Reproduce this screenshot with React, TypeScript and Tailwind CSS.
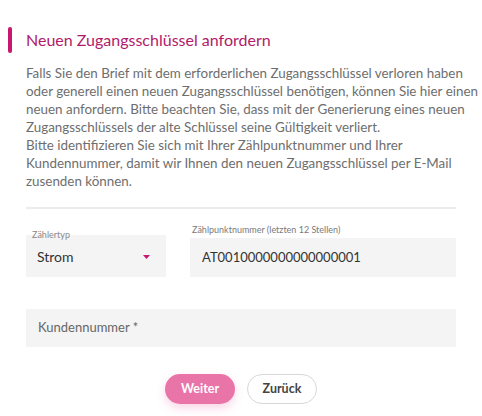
export default function App() {
    const lines = [
        'Falls Sie den Brief mit dem erforderlichen Zugangsschlüssel verloren haben',
        'oder generell einen neuen Zugangsschlüssel benötigen, können Sie hier einen',
        'neuen anfordern. Bitte beachten Sie, dass mit der Generierung eines neuen',
        'Zugangsschlüssels der alte Schlüssel seine Gültigkeit verliert.',
        'Bitte identifizieren Sie sich mit Ihrer Zählpunktnummer und Ihrer',
        'Kundennummer, damit wir Ihnen den neuen Zugangsschlüssel per E-Mail',
        'zusenden können.',
    ]

    return (
        <div className="w-[482px] h-[416px] bg-white pt-[27px] font-['Lato',sans-serif] overflow-hidden">
            {/* header */}
            <div className="flex items-center">
                <div className="ml-2 h-[26px] w-1 rounded-full bg-[#c8176e]" />
                <h1 className="ml-[14px] text-[16px] leading-6 text-[#b11a6a]">Neuen Zugangsschlüssel anfordern</h1>
            </div>

            <div className="mx-[26px]">
                <p className="mt-[11px] text-[13.4px] leading-[18px] text-[#6e6e6e]">
                    {lines.map((l) => (
                        <span key={l} className="block whitespace-nowrap">{l}</span>
                    ))}
                </p>

                <div className="mt-[17px] h-[2px] bg-[#ececec]" />

                <div className="mt-[15px] flex items-start">
                    <div className="relative mt-[11px] flex h-[42px] w-[140px] items-center justify-between bg-[#f4f4f4] pl-[11px] pr-4">
                        <span className="absolute -top-[6px] left-[6px] text-[9px] leading-[12px] text-[#8a8a8a]">Zählertyp</span>
                        <span className="text-[14px] text-[#333]">Strom</span>
                        <svg width="7" height="4" viewBox="0 0 7 4" className="mt-[1px]">
                            <path d="M0 0h7L3.5 4z" fill="#c8176e" />
                        </svg>
                    </div>

                    <div className="ml-[24px] flex-1">
                        <div className="pl-[2px] text-[9px] leading-[12px] text-[#7a7a7a]">Zählpunktnummer (letzten 12 Stellen)</div>
                        <div className="mt-[2px] flex h-[39px] items-center bg-[#f4f4f4] pl-3 text-[13px] text-[#333]">
                            AT0010000000000000001
                        </div>
                    </div>
                </div>

                <div className="mt-[32px] flex h-[38px] items-center bg-[#f4f4f4] pl-3 text-[13px] text-[#666]">
                    Kundennummer *
                </div>

                <div className="mt-[27px] flex justify-center gap-3">
                    <button className="h-[30px] w-[70px] rounded-full bg-[#e874a8] text-[12.5px] font-bold text-white shadow-[0_4px_10px_rgba(232,116,168,0.3)]">
                        Weiter
                    </button>
                    <button className="h-[30px] w-[70px] rounded-full border border-[#d8d8d8] bg-white text-[12.5px] font-bold text-[#444]">
                        Zurück
                    </button>
                </div>
            </div>
        </div>
    )
}
